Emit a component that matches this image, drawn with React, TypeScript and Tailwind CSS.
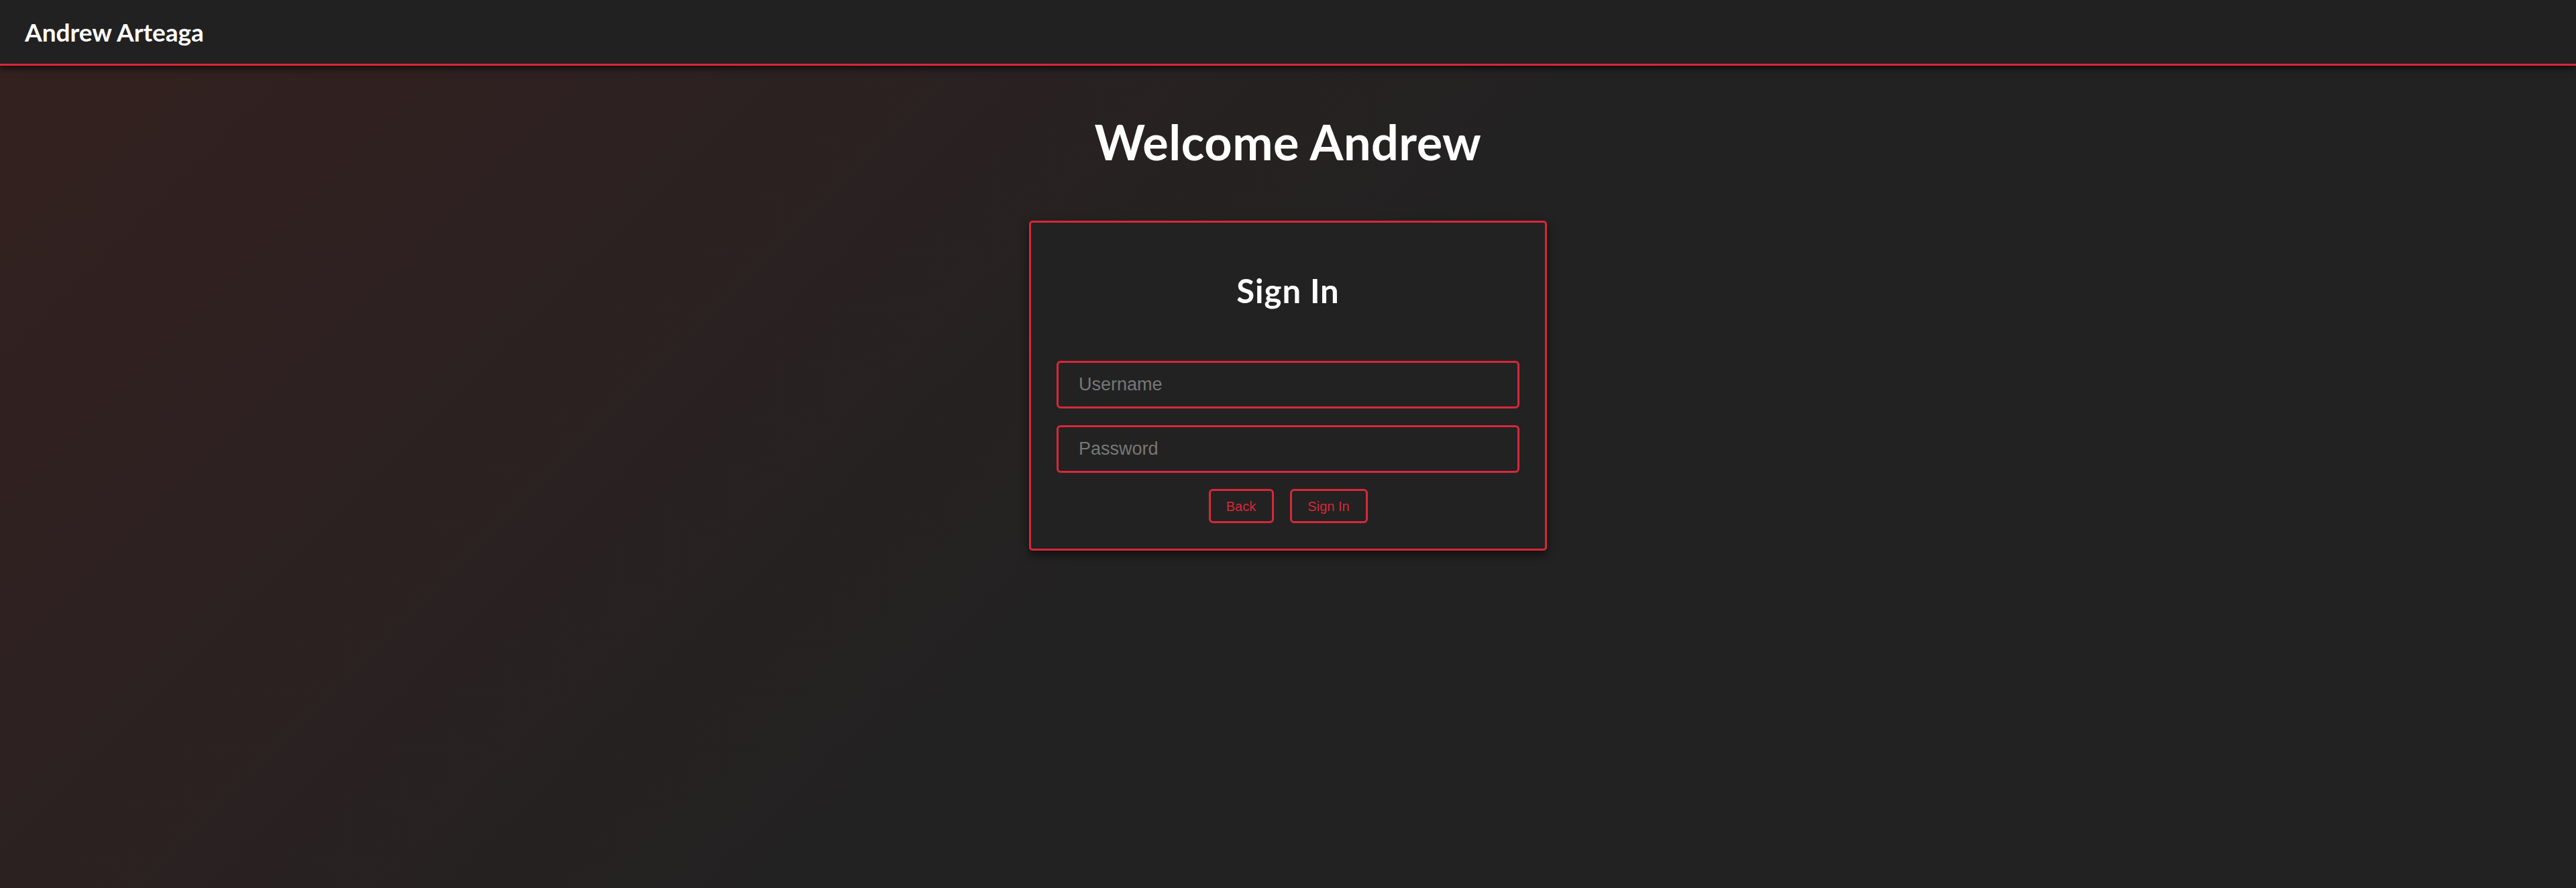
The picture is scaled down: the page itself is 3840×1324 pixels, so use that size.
const App = () => (
  <div className="min-h-screen bg-[#222222] bg-[linear-gradient(135deg,#34211f_0%,#2c2121_25%,#222222_50%)] text-white">
    <header className="h-[98px] bg-[#212121] border-b-[3px] border-[#d62839] shadow-[0_4px_10px_rgba(0,0,0,0.6)] flex items-center px-[37px]">
      <h1 className="font-['Lato',sans-serif] font-bold text-[37px] leading-none">Andrew Arteaga</h1>
    </header>

    <main className="flex flex-col items-center">
      <h2 className="mt-[77px] font-['Lato',sans-serif] font-bold text-[72px] tracking-[0.5px] leading-none">Welcome Andrew</h2>

      <div className="mt-[82px] w-[772px] bg-[#222222] border-[3px] border-[#d62839] rounded-[5px] shadow-[0_6px_14px_rgba(0,0,0,0.55)] px-[38px] pt-[77px] pb-[38px] flex flex-col">
        <h3 className="text-center font-['Lato',sans-serif] font-bold text-[49px] tracking-[1px] leading-none">Sign In</h3>

        <form className="mt-[80px] flex flex-col gap-[25px]">
          <input
            type="text"
            placeholder="Username"
            className="h-[71px] w-full bg-transparent border-[3px] border-[#d62839] rounded-[6px] pl-[30px] font-['Liberation_Sans',Arial,sans-serif] text-[27px] text-white placeholder:text-[#777777] outline-none"
          />
          <input
            type="password"
            placeholder="Password"
            className="h-[71px] w-full bg-transparent border-[3px] border-[#d62839] rounded-[6px] pl-[30px] font-['Liberation_Sans',Arial,sans-serif] text-[27px] text-white placeholder:text-[#777777] outline-none"
          />
          <div className="-mt-[1px] flex justify-center gap-[24px]">
            <button type="button" className="h-[51px] w-[97px] border-[3px] border-[#d62839] rounded-[6px] font-['Liberation_Sans',Arial,sans-serif] text-[20px] text-[#d62839]">
              Back
            </button>
            <button type="button" className="h-[51px] w-[116px] border-[3px] border-[#d62839] rounded-[6px] font-['Liberation_Sans',Arial,sans-serif] text-[20px] text-[#d62839]">
              Sign In
            </button>
          </div>
        </form>
      </div>
    </main>
  </div>
);

export default App;
